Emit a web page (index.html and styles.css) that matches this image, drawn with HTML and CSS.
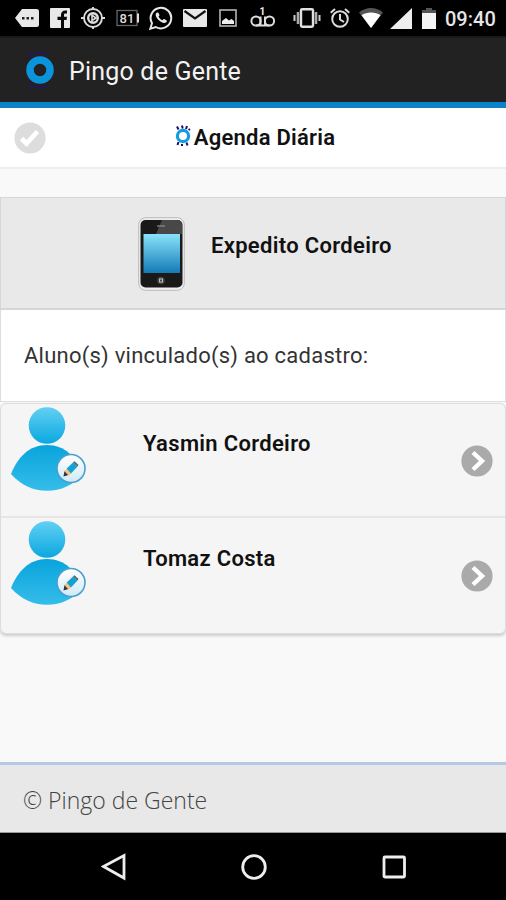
FILE: index.html
```html
<!DOCTYPE html>
<html lang="pt-BR">
  <head>
    <meta charset="utf-8">
    <title>Pingo de Gente</title>
    <link rel="stylesheet" href="styles.css">
  </head>
  <body>
    <!-- gradients and symbols shared by the icons -->
    <svg class="defs" width="0" height="0">
      <defs>
        <linearGradient id="head" x1="0" y1="0" x2="0" y2="1">
          <stop offset="0" stop-color="#62d0f4"/>
          <stop offset="1" stop-color="#0aa8df"/>
        </linearGradient>
        <linearGradient id="torso" x1="0" y1="0" x2="0" y2="1">
          <stop offset="0" stop-color="#08a4dc"/>
          <stop offset="1" stop-color="#35bdea"/>
        </linearGradient>
        <linearGradient id="badge" x1="0" y1="0" x2="0" y2="1">
          <stop offset="0" stop-color="#ffffff"/>
          <stop offset="1" stop-color="#cfeaf7"/>
        </linearGradient>
        <linearGradient id="screen" x1="0" y1="0" x2="0" y2="1">
          <stop offset="0" stop-color="#8ae3fa"/>
          <stop offset="1" stop-color="#137bb7"/>
        </linearGradient>
      </defs>
      <symbol id="student" viewBox="0 0 76 86">
        <circle cx="36" cy="19.500" r="18.300" fill="url(#head)"/>
        <path d="M0 68C7 51 18 39 36 39S65 51 72 68C62 79 50 84.800 36 84.800S10 79 0 68Z" fill="url(#torso)"/>
        <circle cx="60" cy="62.500" r="14" fill="url(#badge)" stroke="#4b9fce" stroke-width="1.600"/>
        <path d="M52.500 70.500l1-5.500 4 4z" fill="#333"/>
        <path d="M53.500 65l2.500-2.500 4.500 4.500-3 2.500z" fill="#efc184"/>
        <path d="M55.700 62.500L62 56.500l4.500 4-6.500 7z" fill="#16a0d3"/>
        <path d="M62 56.500l1.500-1.200 4 3.800-1 1.400z" fill="#52646d"/>
      </symbol>
      <symbol id="arrow" viewBox="0 0 32 32">
        <circle cx="16" cy="16" r="15.600" fill="#aaa"/>
        <path d="M12 7.500l9 8.500-9 8.500" fill="none" stroke="#fff" stroke-width="4.400"/>
      </symbol>
    </svg>

    <div class="status">
      <svg class="st-tag" width="26" height="20" viewBox="0 0 26 20">
        <path d="M8 1h14.500a2.500 2.500 0 0 1 2.500 2.500v13a2.500 2.500 0 0 1-2.500 2.500H8L1 10z" fill="#e8e8e8"/>
        <path d="M8 9h2.500v2.500H8zM12.500 9H15v2.500h-2.500zM17 9h2.500v2.500H17z" fill="#222"/>
      </svg>
      <svg class="st-fb" width="20" height="20" viewBox="0 0 20 20">
        <rect width="20" height="20" rx="1" fill="#e8e8e8"/>
        <path d="M11 20v-8H7.500V8.800H11V7c0-3 1.500-4.500 4.500-4.500H17v3h-1.500c-1.200 0-1.500.6-1.500 1.600v1.700h3l-.5 3.200H14v8z" fill="#080808"/>
      </svg>
      <svg class="st-target" width="24" height="22" viewBox="0 0 24 22" fill="none" stroke="#ddd" stroke-width="1.900">
        <circle cx="12" cy="11" r="9"/>
        <circle cx="12" cy="11" r="4.800" stroke-width="2.400"/>
        <path d="M12 0v3M12 19v3M0 11h4M20 11h4"/>
        <path d="M11 16V8l4 3-3 2" stroke-width="1.600"/>
      </svg>
      <svg class="st-81" width="24" height="18" viewBox="0 0 24 18">
        <rect x="1" y="1.500" width="20" height="15" fill="none" stroke="#666" stroke-width="1.300"/>
        <path d="M21 4.500h2v9h-2z" fill="#ddd"/>
        <text x="3.500" y="14" class="level">81</text>
      </svg>
      <svg class="st-wa" width="24" height="24" viewBox="0 0 24 24">
        <path d="M1.300 22.700L3 17.200A10.300 10.300 0 1 1 6.800 21z" fill="none" stroke="#e8e8e8" stroke-width="2"/>
        <path d="M8 6.500c-2.300 1-1.400 4.400 1.300 7.200s6.200 4.500 8.200 2.300c.5-.7.400-1.500-.2-1.800l-2.100-1.100c-.6-.2-1 .3-1.600 1.200-2-.8-3.200-2-4.100-3.900.9-.7 1.100-1 .9-1.600l-.9-1.900c-.3-.5-.9-.6-1.500-.4z" fill="#e8e8e8"/>
      </svg>
      <svg class="st-mail" width="24" height="18" viewBox="0 0 24 18">
        <rect width="24" height="18" rx="1" fill="#e8e8e8"/>
        <path d="M1.500 2L12 9.500 22.500 2" fill="none" stroke="#111" stroke-width="2.200"/>
      </svg>
      <svg class="st-img" width="18" height="18" viewBox="0 0 18 18">
        <rect x="1" y="1" width="16" height="16" fill="none" stroke="#aaa" stroke-width="1.700"/>
        <path d="M3 15v-3l4-3 3 2.500L12.500 10l2.500 2v3z" fill="#eee"/>
      </svg>
      <svg class="st-vm" width="26" height="22" viewBox="0 0 26 22">
        <g fill="none" stroke="#ddd" stroke-width="2">
          <circle cx="6" cy="15" r="4.600"/>
          <circle cx="19.500" cy="15" r="4.600"/>
          <path d="M10.500 10.500v9M15 10.500v9M6 19.600h13.500"/>
        </g>
        <text x="9.500" y="8.500" class="count">1</text>
      </svg>
      <svg class="st-vib" width="28" height="20" viewBox="0 0 28 20">
        <rect x="8" y="1.200" width="12" height="17.600" rx="1.200" fill="none" stroke="#e0e0e0" stroke-width="2.400"/>
        <path d="M5 4v12M23 4v12" stroke="#aaa" stroke-width="2.600"/>
        <path d="M1.500 7v6M26.500 7v6" stroke="#ccc" stroke-width="2"/>
      </svg>
      <svg class="st-alarm" width="20" height="20" viewBox="0 0 20 20" fill="none" stroke="#ddd" stroke-width="2">
        <circle cx="10" cy="11" r="7.800"/>
        <path d="M.7 4.700L5 1M19.300 4.700L15 1M10 6v5.500l4 2.500"/>
      </svg>
      <svg class="st-wifi" width="24" height="20" viewBox="0 0 24 20">
        <path d="M0 4.500C7-1.500 17-1.500 24 4.500L12 20z" fill="#555"/>
        <path d="M2.500 7.300c5-3.600 14-3.600 19 0L12 20z" fill="#fff"/>
      </svg>
      <svg class="st-signal" width="22" height="21" viewBox="0 0 22 21">
        <path d="M22 0v21H0z" fill="#eee"/>
      </svg>
      <svg class="st-batt" width="14" height="21" viewBox="0 0 14 21">
        <path d="M4 0h6v2h4v4H0V2h4z" fill="#555"/>
        <path d="M0 5h14v16H0z" fill="#f4f4f4"/>
      </svg>
      <span class="clock">09:40</span>
    </div>

    <header class="app-bar">
      <svg class="logo" width="30" height="40" viewBox="0 0 30 40">
        <circle cx="15" cy="20" r="10" fill="none" stroke="#0b94dc" stroke-width="7.500"/>
        <g fill="none" stroke="#2808a0" stroke-width="2" stroke-dasharray="2 3">
          <path d="M5 5q10-5 19 0"/>
          <path d="M5 35q10 5 19 0"/>
        </g>
      </svg>
      <span class="app-name">Pingo de Gente</span>
    </header>

    <div class="title-bar">
      <svg class="check" width="32" height="32" viewBox="0 0 32 32">
        <circle cx="16" cy="16" r="15.600" fill="#ddd"/>
        <path d="M7.500 16.500l5 5 11-12" fill="none" stroke="#fff" stroke-width="4.800"/>
      </svg>
      <h1>
        <svg class="mark" width="16" height="22" viewBox="0 0 16 22">
          <circle cx="8" cy="11" r="5.600" fill="none" stroke="#159be4" stroke-width="3.200"/>
          <path d="M2 1.500l1.500 3M7 .5l.7 3M12 1l-1 3M15 4l-1.500 1M2.500 20l1-3M7 21v-2M12.500 20.500l-1-3" stroke="#16136a" stroke-width="2"/>
        </svg>
        <span>Agenda Diária</span>
      </h1>
    </div>

    <main>
      <section class="owner">
        <svg width="48" height="74" viewBox="0 0 48 74">
          <rect x=".7" y=".7" width="45.600" height="72.600" rx="7" fill="#eee" stroke="#bbb"/>
          <rect x="2.500" y="3" width="42" height="67.500" rx="5" fill="#191919"/>
          <path d="M24 3h15a5 5 0 0 1 5 5v9H18z" fill="#484848"/>
          <path d="M19 9h8" stroke="#888" stroke-width="1.300"/>
          <rect x="5.500" y="17" width="36.500" height="39" fill="url(#screen)"/>
          <circle cx="23" cy="63.500" r="3.800" fill="#444"/>
          <rect x="21.500" y="62" width="3" height="3" fill="none" stroke="#bbb"/>
        </svg>
        <h2>Expedito Cordeiro</h2>
      </section>
      <p class="linked">Aluno(s) vinculado(s) ao cadastro:</p>
      <ul class="students">
        <li>
          <svg class="avatar" width="76" height="86"><use href="#student"/></svg>
          <h3>Yasmin Cordeiro</h3>
          <svg class="go" width="32" height="32"><use href="#arrow"/></svg>
        </li>
        <li>
          <svg class="avatar" width="76" height="86"><use href="#student"/></svg>
          <h3>Tomaz Costa</h3>
          <svg class="go" width="32" height="32"><use href="#arrow"/></svg>
        </li>
      </ul>
    </main>

    <footer><span>© Pingo de Gente</span></footer>

    <nav>
      <svg width="26" height="28" viewBox="0 0 26 28"><path d="M2.500 13.500L23 2.500v22.500z"/></svg>
      <svg width="26" height="28" viewBox="0 0 26 28"><circle cx="13" cy="14" r="11.300"/></svg>
      <svg width="26" height="28" viewBox="0 0 26 28"><rect x="3" y="4" width="20.500" height="20" rx="1"/></svg>
    </nav>
  </body>
</html>
```
FILE: styles.css
```css
* { box-sizing: border-box; }

body {
  margin: 0;
  height: 900px;
  display: flex;
  flex-direction: column;
  background: #f9f9f9;
  color: #111;
  font-family: Roboto, sans-serif;
  overflow: hidden;
}
svg { display: block; flex: none; }
.defs { position: absolute; }
h1, h2, h3, p, ul { margin: 0; padding: 0; }
h1, h2, h3 {
  font-size: 22px;
  font-weight: 600;
  line-height: 26px;
  letter-spacing: .32px;
  white-space: nowrap;
}

/* phone status bar */
.status {
  height: 36px;
  display: flex;
  align-items: center;
  padding-left: 14px;
  background: #000;
}
.st-fb { margin-left: 10px; }
.st-target { margin-left: 11px; }
.st-81 { margin-left: 11px; }
.st-wa { margin-left: 9px; }
.st-mail { margin-left: 10px; }
.st-img { margin-left: 12px; }
.st-vm { margin-left: 13px; margin-top: -3px; }
.st-vib { margin-left: 17px; }
.st-alarm { margin-left: 9px; }
.st-wifi { margin-left: 9px; }
.st-signal { margin-left: 7px; }
.st-batt { margin-left: 10px; }
.level { font-size: 13px; font-weight: 500; fill: #ddd; }
.count { font-size: 10px; font-weight: 700; fill: #eee; }
.clock {
  margin-left: 9px;
  padding-top: 2px;
  color: #e6e6e6;
  font-size: 20px;
  font-weight: 500;
}

.app-bar {
  height: 72px;
  display: flex;
  align-items: center;
  padding: 2px 0 0 25px;
  background: #222;
  border-bottom: 6px solid #0b83c8;
  box-shadow: inset 0 2px #191919;
}
.app-name {
  margin-left: 14px;
  padding-top: 2px;
  color: #f3f3f3;
  font-size: 25px;
  letter-spacing: .2px;
}

.title-bar {
  height: 61px;
  display: grid;
  grid-template-columns: 46px 1fr 46px;
  align-items: center;
  background: #fff;
  border-bottom: 2px solid #eee;
}
.check { margin-left: 14px; }
h1 {
  display: flex;
  align-items: center;
  justify-content: center;
  gap: 3px;
  padding-left: 4px;
  letter-spacing: .25px;
}
.mark { margin-top: -3px; }

main { padding-top: 28px; }
.owner {
  height: 113px;
  display: flex;
  padding: 19px 0 0 137px;
  background: #e9e9e9;
  border: 1px solid #d6d6d6;
  border-bottom-width: 2px;
}
.owner h2 { margin: 16px 0 0 25px; }
.linked {
  height: 92px;
  padding: 33px 0 0 23px;
  background: #fff;
  border: 1px solid #ddd;
  border-top: 0;
  font-size: 22px;
  line-height: 26px;
  letter-spacing: .24px;
  color: #333;
}
.students {
  list-style: none;
  height: 231px;
  margin-top: 1px;
  background: #f5f5f5;
  border: 1px solid #ddd;
  border-radius: 6px;
  box-shadow: 0 2px 3px #ccc;
}
.students li {
  height: 112px;
  display: flex;
  padding: 2px 12px 0 10px;
}
.students li + li {
  height: 117px;
  padding-top: 3px;
  border-top: 2px solid #e6e6e6;
}
h3 { margin: 25px 0 0 56px; }
.go { margin: 39px 0 0 auto; }
li + li .avatar { margin-top: -1px; }

footer {
  height: 71px;
  margin-top: auto;
  padding: 3px 0 0 23px;
  display: flex;
  align-items: center;
  background: #e8e8e8;
  border-top: 3px solid #b5c9e5;
  border-bottom: 1px solid #999;
  color: #444;
  font-family: "Open Sans", sans-serif;
  font-size: 23px;
  font-weight: 300;
}

nav {
  height: 67px;
  display: flex;
  align-items: center;
  justify-content: space-between;
  padding: 0 99px 0 101px;
  background: #000;
}
nav svg {
  fill: none;
  stroke: #eee;
  stroke-width: 2.8;
}
```
